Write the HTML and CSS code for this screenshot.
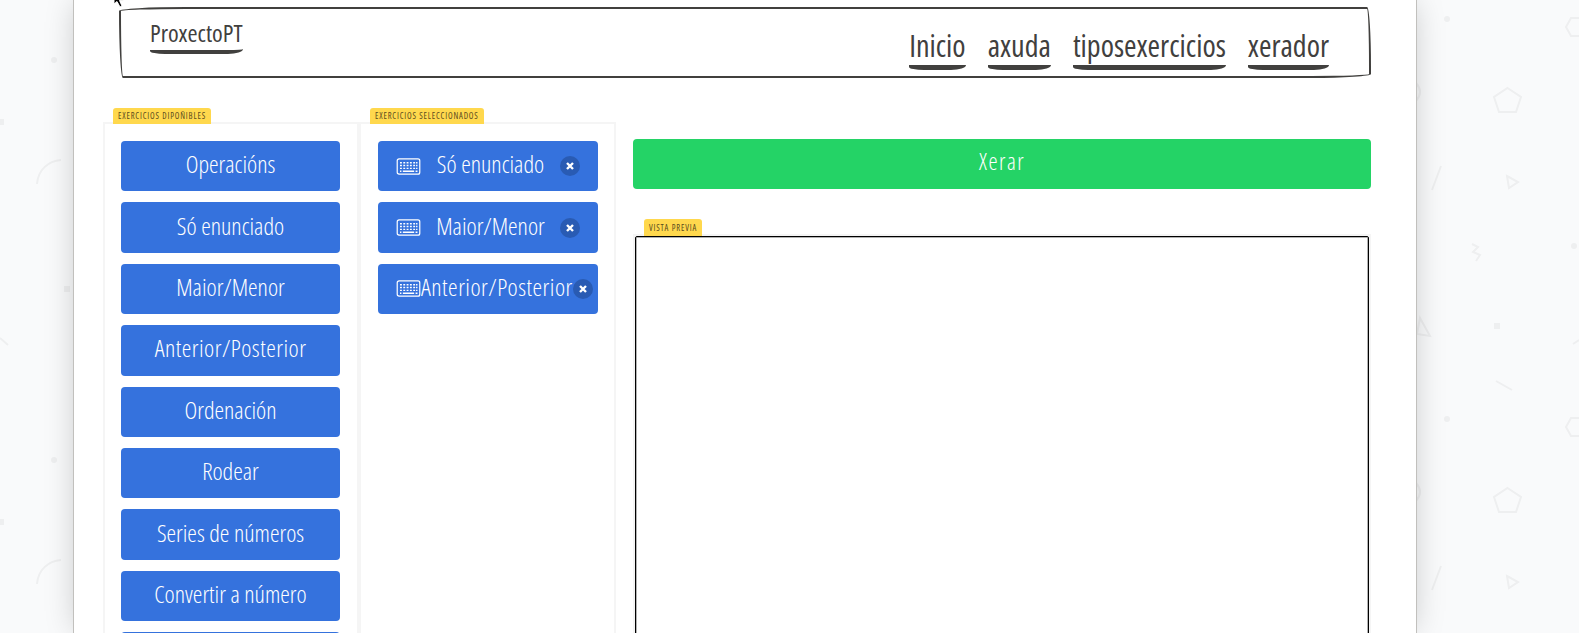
FILE: index.html
```html
<!DOCTYPE html>
<html lang="gl">
<head>
<meta charset="utf-8">
<title>ProxectoPT</title>
<link rel="stylesheet" href="styles.css">
</head>
<body>
<main class="paper">
  <svg class="cursor" width="14" height="10" viewBox="0 0 14 10"><path d="M1 -6 L1 4 L4 1.500 L7 7 L9 6 L6.500 .5 L11 0 Z" fill="#000" stroke="#fff" stroke-width="1"/></svg>
  <nav class="navbar">
    <a class="brand" href="#">ProxectoPT</a>
    <ul class="links">
      <li><a href="#">Inicio</a></li>
      <li><a href="#">axuda</a></li>
      <li><a href="#">tiposexercicios</a></li>
      <li><a href="#">xerador</a></li>
    </ul>
  </nav>
  <div class="workspace">
    <section class="panel panel-left">
      <span class="tag">Exercicios dipoñibles</span>
      <div class="stack">
        <button class="btn">Operacións</button>
        <button class="btn">Só enunciado</button>
        <button class="btn">Maior/Menor</button>
        <button class="btn wide">Anterior/Posterior</button>
        <button class="btn">Ordenación</button>
        <button class="btn">Rodear</button>
        <button class="btn">Series de números</button>
        <button class="btn">Convertir a número</button>
        <button class="btn"></button>
      </div>
    </section>
    <section class="panel panel-right">
      <span class="tag">Exercicios seleccionados</span>
      <div class="stack">
        <div class="btn chip"><svg class="kbd" viewBox="0 0 26 18"><use href="#keyboard"/></svg><span class="chip-label">Só enunciado</span><span class="close"><svg viewBox="0 0 10 10"><path d="M2 2 8 8M8 2 2 8"/></svg></span></div>
        <div class="btn chip"><svg class="kbd" viewBox="0 0 26 18"><use href="#keyboard"/></svg><span class="chip-label">Maior/Menor</span><span class="close"><svg viewBox="0 0 10 10"><path d="M2 2 8 8M8 2 2 8"/></svg></span></div>
        <div class="btn chip"><svg class="kbd" viewBox="0 0 26 18"><use href="#keyboard"/></svg><span class="chip-label wide">Anterior/Posterior</span><span class="close"><svg viewBox="0 0 10 10"><path d="M2 2 8 8M8 2 2 8"/></svg></span></div>
      </div>
    </section>
    <section class="output">
      <button class="btn btn-green">Xerar</button>
      <div class="preview">
        <span class="tag">Vista previa</span>
        <div class="sheet"></div>
      </div>
    </section>
  </div>
</main>
<svg class="defs" width="0" height="0">
  <symbol id="keyboard" viewBox="0 0 26 18">
    <rect x="1" y="1" width="24" height="16" rx="2" fill="none" stroke="#fff" stroke-width="1.4"/>
    <path d="M4 5h2M7.500 5h2M11 5h2M14.500 5h2M18 5h2M21 5h1.500M4 8h2M7.500 8h2M11 8h2M14.500 8h2M18 8h2M21 8h1.500M4 11h2M7.500 11h2M11 11h2M14.500 11h2M18 11h2M21 11h1.500M7 14h12M4 14h1.500M20.500 14h2" stroke="#fff" stroke-width="1.500" fill="none"/>
  </symbol>
</svg>
</body>
</html>
```
FILE: styles.css
```css
* { box-sizing: border-box; }
html, body { margin: 0; height: 100%; }
body {
  overflow: hidden;
  background-color: #f9fafb;
  background-image: url("data:image/svg+xml,%3Csvg xmlns='http://www.w3.org/2000/svg' width='1579' height='400'%3E%3Cg fill='none' stroke='%23eeeff0' stroke-width='2'%3E%3Cpath d='M1579 18h-8l-5 9 5 9h8'/%3E%3Cpath d='M1507.500 88 1521 97 1516 112H1499L1494 97Z'/%3E%3Cpath d='M1416 83Q1424 92 1416 101'/%3E%3Cpath d='M1441 166 1432 190'/%3E%3Cpath d='M1507 176 1518 182 1509 188Z'/%3E%3Cpath d='M1472 244 1478 247 1473 252 1480 255 1476 261'/%3E%3Cpath d='M1420 318 1430 336 1417 334Z'/%3E%3Cpath d='M1573 344 1579 340'/%3E%3Cpath d='M1496 381 1512 390'/%3E%3Cpath d='M37 184C38 170 48 161 61 160'/%3E%3Cpath d='M0 338 8 345'/%3E%3C/g%3E%3Cg fill='%23eeeff0'%3E%3Ccircle cx='1447' cy='19' r='3'/%3E%3Ccircle cx='1574' cy='246' r='3'/%3E%3Ccircle cx='54' cy='60' r='3'/%3E%3Crect x='1494' y='323' width='6' height='6'/%3E%3Crect x='0' y='119' width='4' height='6'/%3E%3Crect x='64' y='286' width='6' height='6'/%3E%3C/g%3E%3C/svg%3E");
  font-family: "Open Sans", "Liberation Sans", sans-serif;
  font-stretch: 75%;
  font-weight: 300;
  color: #41403e;
}
.defs { position: absolute; }
.paper {
  position: relative;
  width: 1344px;
  height: 633px;
  margin-left: 73px;
  background: #fff;
  border: solid #c1c0bd;
  border-width: 0 1px;
  box-shadow: 0 0 30px -4px rgba(0, 0, 0, .22);
  padding: 7px 45px 0 29px;
  overflow: hidden;
}
.cursor { position: absolute; left: 39px; top: 0; }
.navbar {
  display: flex;
  align-items: flex-start;
  justify-content: space-between;
  height: 71px;
  margin-left: 16px;
  padding: 7px 40px 0 29px;
  border: 2px solid #41403e;
  border-radius: 255px 15px 225px 15px / 15px 225px 15px 255px;
}
.brand, .links a {
  color: #41403e;
  text-decoration: none;
  display: inline-block;
  font-weight: 400;
  border-bottom-style: solid;
  border-bottom-color: #41403e;
  border-bottom-left-radius: 15px 3px;
  border-bottom-right-radius: 15px 5px;
}
.brand { font-size: 24.300px; line-height: 34px; border-bottom-width: 4px; }
.links { display: flex; gap: 22px; list-style: none; margin: 0; padding: 12px 0 0; }
.links a { font-size: 30.200px; line-height: 35px; padding-bottom: 2px; border-bottom-width: 5px; }
.workspace { display: flex; margin-top: 44px; }
.panel {
  position: relative;
  flex: none;
  height: 520px;
  border: 2px solid #f5f5f5;
}
.panel-left { width: 256px; padding: 17px 17px 0 16px; }
.panel-right { width: 257px; padding: 17px 16px 0 17px; }
.tag {
  position: absolute;
  display: block;
  top: -16px;
  left: 8px;
  height: 16px;
  padding: 0 5px;
  background: #ffd84d;
  border-radius: 3px 3px 0 0;
  color: #5a4a1e;
  font-size: 8.500px;
  font-weight: 400;
  line-height: 16px;
  letter-spacing: .84px;
  text-transform: uppercase;
  white-space: nowrap;
}
.panel-right .tag { left: 9px; }
.stack { display: flex; flex-direction: column; gap: 11px; }
.btn {
  display: block;
  width: 100%;
  height: 50.400px;
  padding: 0 0 5px;
  border: 0;
  border-radius: 4px;
  background: #3572dd;
  color: #fff;
  font-family: inherit;
  font-stretch: inherit;
  font-weight: 300;
  font-size: 24.200px;
  text-align: center;
}
.wide { letter-spacing: .5px; }
.chip { display: flex; align-items: center; padding: 0 0 0 18px; }
.kbd { flex: none; width: 25px; height: 17px; }
.chip-label { flex: none; min-width: 139px; padding-bottom: 5px; text-align: center; white-space: nowrap; }
.close {
  flex: none;
  display: flex;
  align-items: center;
  justify-content: center;
  width: 20px;
  height: 20px;
  border-radius: 50%;
  background: #295bb3;
}
.close svg { width: 10px; height: 10px; fill: none; stroke: #fff; stroke-width: 2.400; }
.output { flex: none; width: 738px; margin-left: 17px; padding-top: 17px; }
.btn-green { background: #24d366; font-size: 23px; letter-spacing: 1.500px; height: 50px; padding-bottom: 7px; }
.preview { position: relative; margin-top: 45px; height: 500px; border: 2px solid #f5f5f5; }
.preview .tag { left: 9px; top: -17px; height: 17px; line-height: 17px; }
.sheet { height: 500px; border: 1px solid #000; border-radius: 2px 2px 0 0; box-shadow: inset 0 0 0 1px rgba(0, 0, 0, .3); }
```
